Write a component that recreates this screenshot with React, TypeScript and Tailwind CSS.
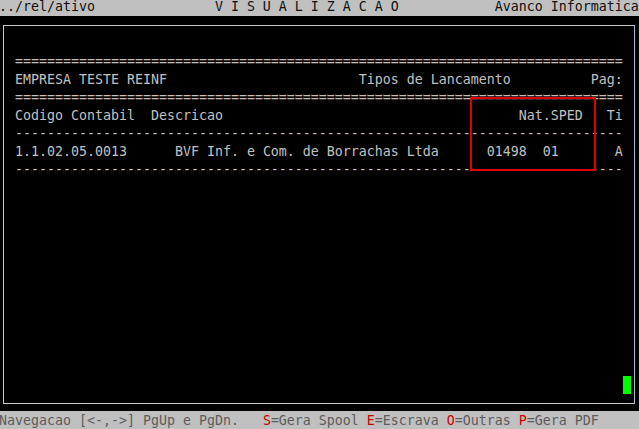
const mono = "font-['DejaVu_Sans_Mono','Liberation_Mono',monospace] text-[13.29px]";

// place strings at fixed terminal columns
function cols(parts: [number, string][]) {
  let s = "";
  for (const [c, t] of parts) {
    s = s.padEnd(c, " ") + t;
  }
  return s;
}

const rows = [
  "=".repeat(76),
  cols([[0, "EMPRESA TESTE REINF"], [43, "Tipos de Lancamento"], [72, "Pag:"]]),
  "=".repeat(76),
  cols([[0, "Codigo Contabil"], [17, "Descricao"], [63, "Nat.SPED"], [74, "Ti"]]),
  "-".repeat(76),
  cols([[0, "1.1.02.05.0013"], [20, "BVF Inf. e Com. de Borrachas Ltda"], [59, "01498"], [66, "01"], [75, "A"]]),
  "-".repeat(76),
];

function Key({ k, label }: { k: string; label: string }) {
  return (
    <>
      <span className="text-[#c80000]">{k}</span>
      {label}
    </>
  );
}

export default function App() {
  return (
    <div className={`w-[639px] h-[429px] bg-black overflow-hidden flex flex-col ${mono}`}>
      {/* title bar */}
      <div className="h-[16px] shrink-0 bg-[#c0c0c0] text-[#101010] leading-[14px] whitespace-pre overflow-hidden">
        <div className="-ml-px">
          {cols([[0, "../rel/ativo"], [27, "V I S U A L I Z A C A O"], [62, "Avanco Informatica"]])}
        </div>
      </div>

      {/* report frame */}
      <div className="relative mt-[9px] ml-[3px] w-[632px] h-[379px] shrink-0 border border-[#c8c8c8] border-r-[#a9b9d0]">
        <div className="pt-[27px] pl-[11px] text-[#c0c0c0] leading-[18px]">
          {rows.map((r, i) => (
            <div key={i} className="h-[18px] whitespace-pre">
              {r}
            </div>
          ))}
        </div>

        {/* highlight box */}
        <div className="absolute left-[466px] top-[71px] w-[126px] h-[74px] border-2 border-[#e00000]" />

        {/* cursor */}
        <div className="absolute left-[619px] top-[350px] w-[8px] h-[18px] bg-[#00ff00]" />
      </div>

      {/* status bar */}
      <div className="mt-[7px] h-[18px] shrink-0 bg-[#c0c0c0] text-[#5c5c5c] pt-[2px] leading-[16px] whitespace-pre">
        <div className="-ml-px">
          {"Navegacao [<-,->] PgUp e PgDn.   "}
          <Key k="S" label="=Gera Spool " />
          <Key k="E" label="=Escrava " />
          <Key k="O" label="=Outras " />
          <Key k="P" label="=Gera PDF" />
        </div>
      </div>
    </div>
  );
}
